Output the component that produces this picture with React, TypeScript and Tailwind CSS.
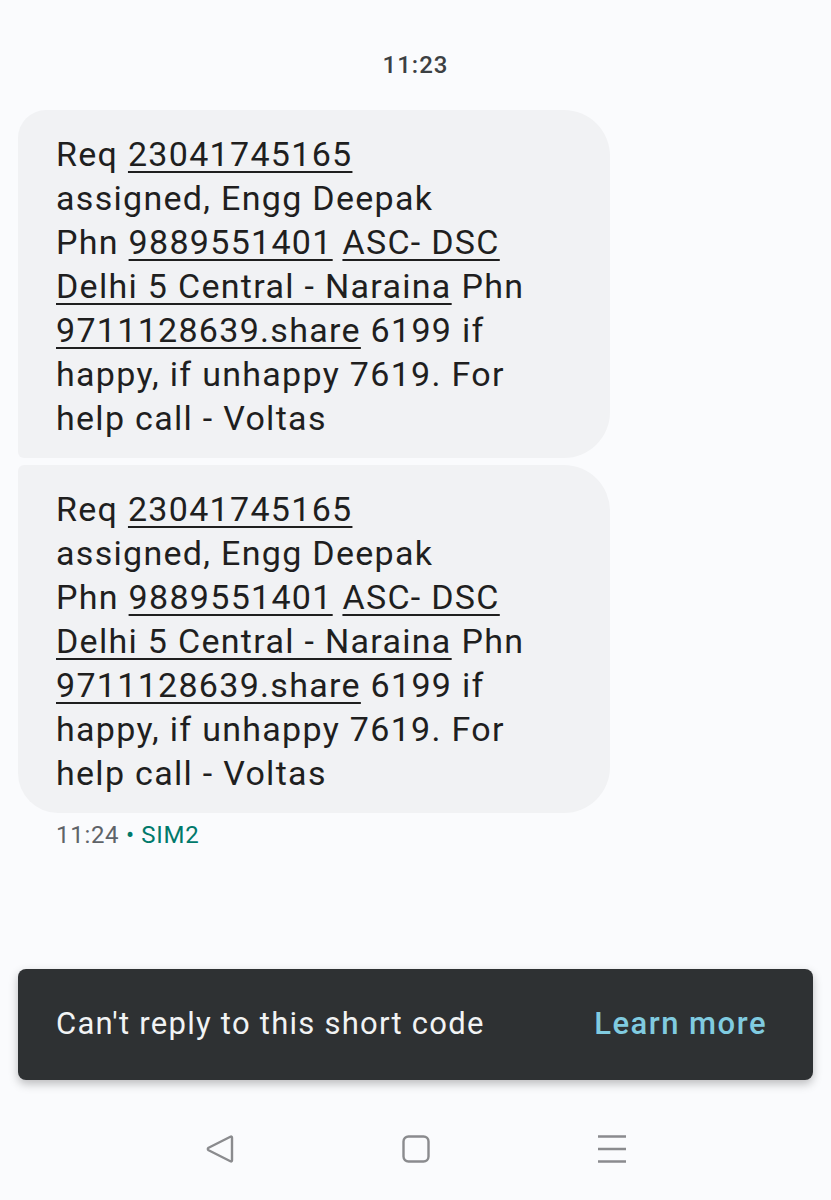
import * as React from "react";

const FONT = { fontFamily: "Roboto, 'Noto Sans', sans-serif" };

// a link-ish piece of the message text
function U({ children }: { children: React.ReactNode }) {
  return (
    <span className="underline decoration-[2px] underline-offset-[5px]">{children}</span>
  );
}

function MessageBody() {
  return (
    <>
      Req <U>23041745165</U>
      <br />
      assigned, Engg Deepak
      <br />
      Phn <U>9889551401</U> <U>ASC- DSC</U>
      <br />
      <U>Delhi 5 Central - Naraina</U> Phn
      <br />
      <U>9711128639.share</U> 6199 if
      <br />
      happy, if unhappy 7619. For
      <br />
      help call - Voltas
    </>
  );
}

export default function App() {
  return (
    <div className="flex h-[1200px] w-[831px] flex-col bg-[#fafbfd] text-[#1f1f1f]" style={FONT}>
      {/* date/time header */}
      <div className="pt-[50px] text-center text-[24px] font-medium leading-[30px] tracking-[1px] text-[#3c4043]">
        11:23
      </div>

      <div className="mt-[30px] flex flex-col gap-[7px] px-[18px]">
        <div className="w-[592px] rounded-tl-[28px] rounded-tr-[46px] rounded-br-[46px] rounded-bl-[6px] bg-[#f1f2f4] pb-[18px] pl-[38px] pt-[22px] text-[34px] leading-[44px] tracking-[1.3px]">
          <MessageBody />
        </div>
        <div className="w-[592px] rounded-tl-[6px] rounded-tr-[46px] rounded-br-[46px] rounded-bl-[40px] bg-[#f1f2f4] pb-[18px] pl-[38px] pt-[22px] text-[34px] leading-[44px] tracking-[1.3px]">
          <MessageBody />
        </div>
      </div>

      <div className="mt-[7px] pl-[56px] text-[24px] leading-[30px] tracking-[0.7px] text-[#5f6368]">
        11:24 <span className="text-[#00796b]">• SIM2</span>
      </div>

      {/* snackbar */}
      <div className="mx-[18px] mt-auto flex h-[111px] items-center justify-between rounded-[8px] bg-[#2e3133] pl-[38px] pr-[46px] shadow-[0_4px_10px_rgba(0,0,0,0.25)]">
        <span className="text-[31px] tracking-[1.25px] text-[#f1f3f4]">Can't reply to this short code</span>
        <span className="text-[31px] font-medium tracking-[1.5px] text-[#80cbe0]">Learn more</span>
      </div>

      {/* navigation bar */}
      <div className="mt-[18px] flex h-[102px] items-center justify-center gap-[168px] bg-[#fafbfd]">
        <svg width="28" height="28" viewBox="0 0 28 28" fill="none" stroke="#8a8b8e" strokeWidth="2.4" strokeLinejoin="round">
          <path d="M26 2.8 L26 25.2 Q26 27 24.4 26.2 L2.6 15.2 Q1 14 2.6 12.8 L24.4 1.8 Q26 1 26 2.8 Z" />
        </svg>
        <svg width="28" height="28" viewBox="0 0 28 28" fill="none" stroke="#8a8b8e" strokeWidth="2.4">
          <rect x="1.5" y="1.5" width="25" height="25" rx="5" />
        </svg>
        <svg width="28" height="28" viewBox="0 0 28 28" fill="none" stroke="#8a8b8e" strokeWidth="2.4">
          <path d="M0 1.5 H28 M0 14 H28 M0 26.5 H28" />
        </svg>
      </div>
    </div>
  );
}
